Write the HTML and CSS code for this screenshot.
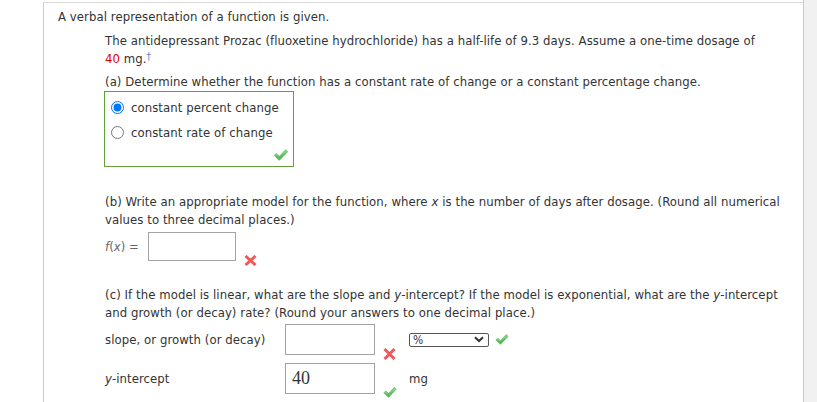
FILE: index.html
```html
<!DOCTYPE html>
<html>
<head>
<meta charset="utf-8">
<link rel="stylesheet" href="styles.css">
</head>
<body>
<div class="page">
  <div class="main">
    <div class="panel">
      <p class="title">A verbal representation of a function is given.</p>
      <div class="content">
        <p class="intro">The antidepressant Prozac (fluoxetine hydrochloride) has a half-life of 9.3 days. Assume a one-time dosage of <span class="red">40</span> mg.<span class="dagger">&#8224;</span></p>
        <p class="qa">(a) Determine whether the function has a constant rate of change or a constant percentage change.</p>
        <div class="choices">
          <label class="choice"><input type="radio" name="a" checked>constant percent change</label>
          <label class="choice"><input type="radio" name="a">constant rate of change</label>
          <svg class="ok ok-a" width="14" height="12" viewBox="0 0 14 12"><path d="M0 6.6 L2.4 4.2 L5.3 7 L11.6 0.4 L14 2.8 L5.3 11.8 Z" fill="#5cb85c"/><path d="M0 6.6 L2.4 4.2 L5.3 7 L11.6 0.4 L14 2.8 L5.3 7.6 Z" fill="#7fcf7f"/></svg>
        </div>
        <p class="qb">(b) Write an appropriate model for the function, where <i>x</i> is the number of days after dosage. (Round all numerical values to three decimal places.)</p>
        <div class="fx-row">
          <span class="fx"><i>f</i>(<i>x</i>) =</span>
          <input class="ans ans-fx" type="text">
          <svg class="bad bad-fx" width="13" height="11" viewBox="0 0 13 11"><path d="M1.5 1 L11.5 10 M11.5 1 L1.5 10" stroke="#ee5a5a" stroke-width="3"/></svg>
        </div>
        <p class="qc">(c) If the model is linear, what are the slope and <i>y</i>-intercept? If the model is exponential, what are the <i>y</i>-intercept and growth (or decay) rate? (Round your answers to one decimal place.)</p>
        <div class="grid">
          <span class="lbl">slope, or growth (or decay)</span>
          <input class="ans" type="text">
          <span class="mark"><svg class="bad" width="13" height="12" viewBox="0 0 13 12"><path d="M1.5 1 L11.5 11 M11.5 1 L1.5 11" stroke="#ee5a5a" stroke-width="3"/></svg></span>
          <span class="unit">
            <span class="sel"><span>%</span><svg width="10" height="7" viewBox="0 0 10 7"><path d="M1 1.2 L5 5 L9 1.2" fill="none" stroke="#333" stroke-width="2"/></svg></span>
            <svg class="ok ok-sel" width="14" height="11" viewBox="0 0 14 12"><path d="M0 6.6 L2.4 4.2 L5.3 7 L11.6 0.4 L14 2.8 L5.3 11.8 Z" fill="#5cb85c"/><path d="M0 6.6 L2.4 4.2 L5.3 7 L11.6 0.4 L14 2.8 L5.3 7.6 Z" fill="#7fcf7f"/></svg>
          </span>
          <span class="lbl"><i>y</i>-intercept</span>
          <input class="ans serif" type="text" value="40">
          <span class="mark mark-y"><svg class="ok" width="14" height="11" viewBox="0 0 14 12"><path d="M0 6.6 L2.4 4.2 L5.3 7 L11.6 0.4 L14 2.8 L5.3 7.6 Z" fill="#5cb85c"/><path d="M0 6.6 L2.4 4.2 L5.3 7 L11.6 0.4 L14 2.8 L5.3 11.8 Z" fill="#5cb85c"/><path d="M0 6.6 L2.4 4.2 L5.3 7 L11.6 0.4 L14 2.8 L5.3 7.6 Z" fill="#7fcf7f"/></svg></span>
          <span class="unit">mg</span>
        </div>
      </div>
    </div>
  </div>
  <div class="side"></div>
</div>
</body>
</html>
```

FILE: styles.css
```css
html, body {
  margin: 0;
  padding: 0;
  background: #ffffff;
}
body {
  font-family: "DejaVu Sans Condensed", "DejaVu Sans", sans-serif;
  font-size: 13px;
  letter-spacing: 0.07px;
  line-height: 18px;
  color: #333333;
}
.page {
  display: flex;
  height: 402px;
  overflow: hidden;
}
.main {
  width: 803px;
  padding-top: 2px;
  box-sizing: border-box;
}
.side {
  flex: 1;
  background: #f1f1f1;
  border-left: 1px solid #c9c9c9;
}
.panel {
  margin-left: 43px;
  height: 100%;
  box-sizing: border-box;
  border-top: 1px solid #dcdcdc;
  border-left: 1px solid #cccccc;
  padding: 5px 13px 0 14px;
}
p {
  margin: 0;
}
.content {
  margin-left: 47px;
}
.intro {
  margin-top: 6px;
  max-width: 665px;
}
.red {
  color: #e00000;
}
.dagger {
  color: #5b82d8;
  font-size: 10px;
  vertical-align: top;
  line-height: 14px;
}
.qa {
  margin-top: 5px;
}
.choices {
  position: relative;
  width: 188px;
  height: 71px;
  margin-left: -1px;
  border: 1px solid #62a03c;
  padding-top: 3px;
  box-sizing: content-box;
}
.choice {
  display: flex;
  align-items: center;
  height: 25px;
}
.choice input {
  margin: 0 7px 0 6px;
  width: 13px;
  height: 13px;
}
.ok-a {
  position: absolute;
  right: 5px;
  bottom: 5px;
}
.qb {
  margin-top: 26px;
}
.fx-row {
  display: flex;
  align-items: center;
  margin-top: 3px;
}
.fx {
  color: #666666;
  width: 43px;
  font-size: 13px;
  letter-spacing: 0;
}
.ans {
  box-sizing: border-box;
  width: 90px;
  height: 31px;
  border: 1px solid #a3a3a3;
  padding: 0 6px;
  margin: 0;
  font-family: "Liberation Serif", serif;
  font-size: 18px;
  letter-spacing: 0;
  color: #333333;
  background: #ffffff;
}
.ans-fx {
  width: 88px;
  height: 29px;
}
.bad-fx {
  align-self: flex-end;
  margin: 0 0 -5px 8px;
}
.qc {
  margin-top: 25px;
}
.grid {
  display: grid;
  grid-template-columns: 180px 90px 34px 1fr;
  grid-template-rows: 31px 31px;
  row-gap: 8px;
  margin-top: 2px;
  align-items: center;
}
.mark {
  align-self: end;
  padding-left: 8px;
  margin-bottom: -5px;
  display: flex;
}
.mark-y {
  margin-bottom: -4px;
}
.unit {
  display: flex;
  align-items: center;
}
.sel {
  box-sizing: border-box;
  width: 80px;
  height: 14px;
  border: 1px solid #555555;
  border-radius: 2px;
  display: flex;
  align-items: center;
  justify-content: space-between;
  padding: 0 4px 0 3px;
  font-size: 12px;
  line-height: 12px;
}
.ok-sel {
  margin-left: 6px;
}
```
